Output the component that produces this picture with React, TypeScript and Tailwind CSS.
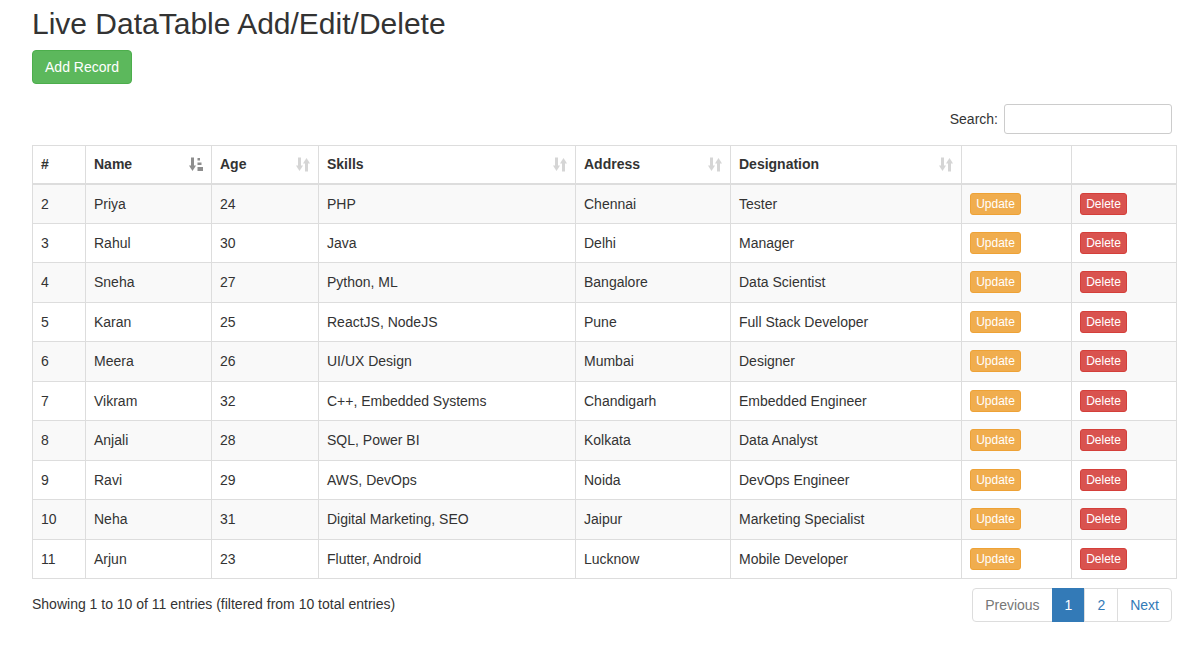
import React from 'react'

const rows = [
  ['2', 'Priya', '24', 'PHP', 'Chennai', 'Tester'],
  ['3', 'Rahul', '30', 'Java', 'Delhi', 'Manager'],
  ['4', 'Sneha', '27', 'Python, ML', 'Bangalore', 'Data Scientist'],
  ['5', 'Karan', '25', 'ReactJS, NodeJS', 'Pune', 'Full Stack Developer'],
  ['6', 'Meera', '26', 'UI/UX Design', 'Mumbai', 'Designer'],
  ['7', 'Vikram', '32', 'C++, Embedded Systems', 'Chandigarh', 'Embedded Engineer'],
  ['8', 'Anjali', '28', 'SQL, Power BI', 'Kolkata', 'Data Analyst'],
  ['9', 'Ravi', '29', 'AWS, DevOps', 'Noida', 'DevOps Engineer'],
  ['10', 'Neha', '31', 'Digital Marketing, SEO', 'Jaipur', 'Marketing Specialist'],
  ['11', 'Arjun', '23', 'Flutter, Android', 'Lucknow', 'Mobile Developer'],
]

function SortBoth() {
  return (
    <svg width="14" height="15" viewBox="0 0 14 15" className="shrink-0">
      <g fill="#333" opacity="0.2">
        <rect x="2" y="0.5" width="3" height="9" />
        <polygon points="0,8.5 7,8.5 3.5,14" />
        <polygon points="7,6.5 14,6.5 10.5,1" />
        <rect x="9" y="6" width="3" height="8.5" />
      </g>
    </svg>
  )
}

function SortAsc() {
  return (
    <svg width="14" height="15" viewBox="0 0 14 15" className="shrink-0">
      <g fill="#333" opacity="0.55">
        <rect x="2" y="0.5" width="3" height="9" />
        <polygon points="0,8.5 7,8.5 3.5,14" />
        <rect x="8.5" y="1" width="2.5" height="2.5" />
        <rect x="8.5" y="5.5" width="4" height="2.5" />
        <rect x="8.5" y="10" width="5.5" height="4" />
      </g>
    </svg>
  )
}

const headers: [string, 'asc' | 'both' | null][] = [
  ['#', null],
  ['Name', 'asc'],
  ['Age', 'both'],
  ['Skills', 'both'],
  ['Address', 'both'],
  ['Designation', 'both'],
  ['', null],
  ['', null],
]

const widths = ['w-[53px]', 'w-[126px]', 'w-[107px]', 'w-[257px]', 'w-[155px]', 'w-[231px]', 'w-[110px]', 'w-[105px]']

export default function App() {
  return (
    <div className="min-h-screen bg-white font-['Liberation_Sans',Arial,sans-serif] text-[14px] leading-[20px] text-[#333] pl-[32px] pr-[14px]">
      <h1 className="text-[30px] leading-[32px] pt-[8px] font-normal">Live DataTable Add/Edit/Delete</h1>
      <button className="mt-[10px] h-[34px] w-[100px] rounded-[4px] border border-[#4cae4c] bg-[#5cb85c] text-white text-[14px]">
        Add Record
      </button>

      <div className="mt-[20px] flex w-[1140px] justify-end items-center gap-[6px]">
        <label>Search:</label>
        <input className="h-[30px] w-[168px] rounded-[3px] border border-[#ccc] px-[8px] text-[12px] outline-none" />
      </div>

      <table className="mt-[11px] w-[1144px] table-fixed border-collapse">
        <colgroup>
          {widths.map((w, i) => (
            <col key={i} className={w} />
          ))}
        </colgroup>
        <thead>
          <tr className="h-[38px]">
            {headers.map(([h, s], i) => (
              <th key={i} className="border border-[#ddd] border-b-2 px-[8px] text-left font-bold align-middle">
                <div className="flex items-center justify-between">
                  <span>{h}</span>
                  {s === 'asc' && <SortAsc />}
                  {s === 'both' && <SortBoth />}
                </div>
              </th>
            ))}
          </tr>
        </thead>
        <tbody>
          {rows.map((r, i) => (
            <tr key={i} className={`h-[39.5px] ${i % 2 === 0 ? 'bg-[#f9f9f9]' : 'bg-white'}`}>
              {r.map((c, j) => (
                <td key={j} className="border border-[#ddd] px-[8px] align-middle">
                  {c}
                </td>
              ))}
              <td className="border border-[#ddd] px-[8px] align-middle">
                <button className="h-[22px] w-[51px] rounded-[3px] border border-[#eea236] bg-[#f0ad4e] text-white text-[12px] leading-[18px]">
                  Update
                </button>
              </td>
              <td className="border border-[#ddd] px-[8px] align-middle">
                <button className="h-[22px] w-[47px] rounded-[3px] border border-[#d43f3a] bg-[#d9534f] text-white text-[12px] leading-[18px]">
                  Delete
                </button>
              </td>
            </tr>
          ))}
        </tbody>
      </table>

      <div className="mt-[9px] flex w-[1144px] justify-between items-start">
        <div className="pt-[6px]">Showing 1 to 10 of 11 entries (filtered from 10 total entries)</div>
        <div className="flex mr-[4px]">
          <span className="h-[34px] px-[12px] py-[6px] border border-[#ddd] rounded-l-[4px] text-[#777]">Previous</span>
          <span className="h-[34px] px-[12px] py-[6px] border border-[#337ab7] bg-[#337ab7] text-white -ml-px">1</span>
          <span className="h-[34px] px-[12px] py-[6px] border border-[#ddd] text-[#337ab7] -ml-px">2</span>
          <span className="h-[34px] px-[12px] py-[6px] border border-[#ddd] rounded-r-[4px] text-[#337ab7] -ml-px">Next</span>
        </div>
      </div>
    </div>
  )
}
